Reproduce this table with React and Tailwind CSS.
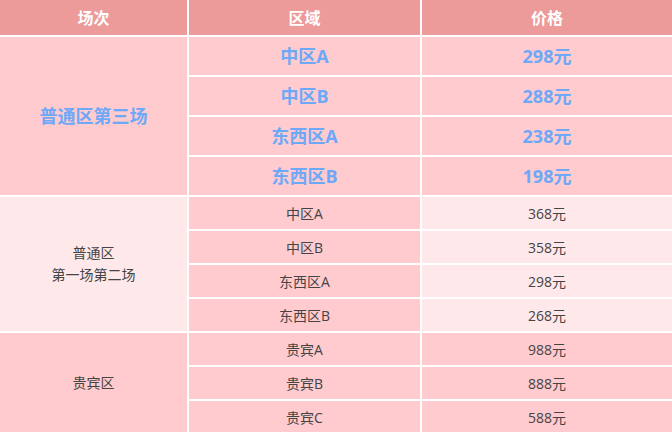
import React from "react"

const font = { fontFamily: '"Open Sans", "Noto Sans CJK SC", sans-serif' }

const groups = [
  {
    name: ["普通区第三场"],
    big: true,
    rows: [
      ["中区A", "298元"],
      ["中区B", "288元"],
      ["东西区A", "238元"],
      ["东西区B", "198元"],
    ],
  },
  {
    name: ["普通区", "第一场第二场"],
    light: true,
    rows: [
      ["中区A", "368元"],
      ["中区B", "358元"],
      ["东西区A", "298元"],
      ["东西区B", "268元"],
    ],
  },
  {
    name: ["贵宾区"],
    rows: [
      ["贵宾A", "988元"],
      ["贵宾B", "888元"],
      ["贵宾C", "588元"],
    ],
  },
]

const span = { 3: "row-span-3", 4: "row-span-4" }

export default function App() {
  return (
    <div
      className="w-[672px] h-[432px] overflow-hidden bg-white grid grid-cols-[187px_231px_250px] grid-rows-[35px_repeat(4,38px)_repeat(7,32px)] gap-[2px]"
      style={font}
    >
      {/* header */}
      {["场次", "区域", "价格"].map((h) => (
        <div key={h} className="bg-[#ed9a9a] text-white font-bold text-[16px] flex items-center justify-center">
          {h}
        </div>
      ))}

      {groups.map((g, gi) =>
        g.rows.map((r, ri) => (
          <React.Fragment key={gi + "-" + ri}>
            {ri === 0 && (
              <div
                className={
                  span[g.rows.length] +
                  " flex flex-col items-center justify-center leading-[22px] " +
                  (g.light ? "bg-[#ffe8ea] " : "bg-[#ffcbce] ") +
                  (g.big ? "text-[18px] font-bold text-[#6ea8f8]" : "text-[14px] text-[#444]")
                }
              >
                {g.name.map((n) => (
                  <span key={n}>{n}</span>
                ))}
              </div>
            )}
            <div
              className={
                "bg-[#ffcbce] flex items-center justify-center " +
                (g.big ? "text-[18px] font-bold text-[#6ea8f8]" : "text-[14px] text-[#444]")
              }
            >
              {r[0]}
            </div>
            <div
              className={
                (g.light ? "bg-[#ffe8ea] " : "bg-[#ffcbce] ") +
                "flex items-center justify-center " +
                (g.big ? "text-[18px] font-bold text-[#6ea8f8]" : "text-[14px] text-[#444]")
              }
            >
              {r[1]}
            </div>
          </React.Fragment>
        ))
      )}
    </div>
  )
}
